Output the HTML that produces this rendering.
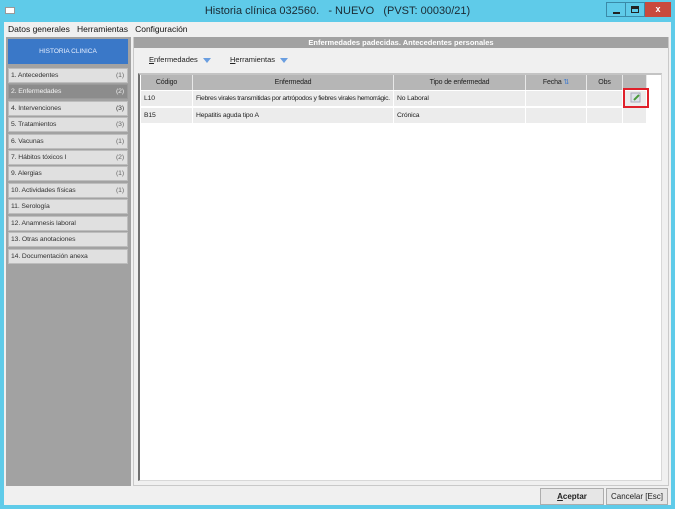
<!DOCTYPE html>
<html><head><meta charset="utf-8"><style>
*{margin:0;padding:0;box-sizing:border-box}
body{width:675px;height:509px;background:#5fcbe9;position:relative;overflow:hidden;font-family:"Liberation Sans",sans-serif;font-size:8px;color:#222}
.a{position:absolute}
.title{left:0;top:0;width:675px;height:22px;background:#5fcbe9;text-align:center;font-size:11px;line-height:23px;color:#1a2a33}
.win{left:4px;top:22px;width:667px;height:483px;background:#f0f0f0}
.menu{left:8px;top:24px;font-size:8.5px;color:#111}
.left{left:6px;top:37px;width:125px;height:449px;background:#a2a2a2}
.hdr{left:8px;top:39px;width:120px;height:25px;background:#3a78c8;color:#e8f0ff;font-size:6.5px;text-align:center;line-height:25px}
.it{left:8px;width:120px;height:15px;background:#e0e0e0;border:1px solid #bdbdbd;font-size:6.8px;line-height:14px;padding-left:2px;color:#333;letter-spacing:-0.1px}
.it span{position:absolute;right:3px;color:#666}
.it.sel{background:#8c8c8c;color:#f4f4f4;border-color:#999}
.it.sel span{color:#f0f0f0}
.rp{left:133px;top:37px;width:536px;height:449px;background:#f0f0f0;border:1px solid #c9c9c9}
.rh{left:134px;top:37px;width:534px;height:11px;background:#a2a2a2;color:#fff;font-weight:bold;font-size:7.5px;text-align:center;line-height:11px}
.tb{top:55px;font-size:7.5px;color:#222}
.tri{display:inline-block;width:0;height:0;border-left:4px solid transparent;border-right:4px solid transparent;border-top:5px solid #6a9ee0;margin-left:5px;vertical-align:middle}
.tbl{left:138px;top:73px;width:524px;height:408px;background:#fff;border-top:2px solid #c4c4c4;border-left:2px solid #707070;border-right:1px solid #d8d8d8;border-bottom:1px solid #d8d8d8}
.c{position:absolute;height:15px;line-height:15px;font-size:6.8px;overflow:hidden;white-space:nowrap;letter-spacing:-0.15px}
.h{background:#b6b6b6;text-align:center;border-right:1px solid #e8e8e8;top:75px;font-size:7px}
.r{background:#ececec;border-right:1px solid #fff;padding-left:3px}
.btn{top:488px;height:17px;background:#e6e6e6;border:1px solid #adadad;font-size:8px;text-align:center;line-height:15px}
</style></head><body>
<div class="a title">Historia clínica 032560.&nbsp;&nbsp; - NUEVO&nbsp;&nbsp; (PVST: 00030/21)</div>
<div class="a" style="left:5px;top:7px;width:10px;height:7px;background:#fff;border:1px solid #999"></div>
<div class="a" style="left:606px;top:2px;width:20px;height:15px;background:#5fcbe9;border:1px solid #3a8aa8"><div class="a" style="left:6px;top:9px;width:7px;height:2px;background:#222"></div></div>
<div class="a" style="left:625px;top:2px;width:20px;height:15px;background:#5fcbe9;border:1px solid #3a8aa8"><div class="a" style="left:5px;top:3px;width:8px;height:7px;border:1px solid #222;border-top-width:3px"></div></div>
<div class="a" style="left:645px;top:2px;width:26px;height:15px;background:#c94a3d;color:#fff;font-weight:bold;font-size:9px;text-align:center;line-height:14px">x</div>
<div class="a win"></div>
<div class="a menu">Datos generales&nbsp;&nbsp; Herramientas&nbsp;&nbsp; Configuración</div>
<div class="a left"></div>
<div class="a hdr">HISTORIA CLINICA</div>
<div class="a it" style="top:68px">1. Antecedentes<span>(1)</span></div>
<div class="a it sel" style="top:84px">2. Enfermedades<span>(2)</span></div>
<div class="a it" style="top:101px">4. Intervenciones<span style="color:#333">(3)</span></div>
<div class="a it" style="top:117px">5. Tratamientos<span>(3)</span></div>
<div class="a it" style="top:134px">6. Vacunas<span>(1)</span></div>
<div class="a it" style="top:150px">7. Hábitos tóxicos I<span>(2)</span></div>
<div class="a it" style="top:166px">9. Alergias<span>(1)</span></div>
<div class="a it" style="top:183px">10. Actividades físicas<span>(1)</span></div>
<div class="a it" style="top:199px">11. Serología</div>
<div class="a it" style="top:216px">12. Anamnesis laboral</div>
<div class="a it" style="top:232px">13. Otras anotaciones</div>
<div class="a it" style="top:249px">14. Documentación anexa</div>
<div class="a rp"></div>
<div class="a rh">Enfermedades padecidas. Antecedentes personales</div>
<div class="a tb" style="left:149px"><u>E</u>nfermedades<span class="tri"></span></div>
<div class="a tb" style="left:230px"><u>H</u>erramientas<span class="tri"></span></div>
<div class="a tbl"></div>
<div class="c h" style="left:141px;width:52px">Código</div>
<div class="c h" style="left:193px;width:201px">Enfermedad</div>
<div class="c h" style="left:394px;width:132px">Tipo de enfermedad</div>
<div class="c h" style="left:526px;width:61px">Fecha <span style="color:#3a78d0">⇅</span></div>
<div class="c h" style="left:587px;width:36px">Obs</div>
<div class="c h" style="left:623px;width:24px"></div>
<div class="c r" style="top:91px;left:141px;width:52px">L10</div>
<div class="c r" style="top:91px;left:193px;width:201px;letter-spacing:-0.3px">Fiebres virales transmitidas por artrópodos y fiebres virales hemorrágic.</div>
<div class="c r" style="top:91px;left:394px;width:132px">No Laboral</div>
<div class="c r" style="top:91px;left:526px;width:61px"></div>
<div class="c r" style="top:91px;left:587px;width:36px"></div>
<div class="c r" style="top:91px;left:623px;width:24px"></div>
<div class="c r" style="top:108px;left:141px;width:52px">B15</div>
<div class="c r" style="top:108px;left:193px;width:201px">Hepatitis aguda tipo A</div>
<div class="c r" style="top:108px;left:394px;width:132px">Crónica</div>
<div class="c r" style="top:108px;left:526px;width:61px"></div>
<div class="c r" style="top:108px;left:587px;width:36px"></div>
<div class="c r" style="top:108px;left:623px;width:24px"></div>
<div class="a" style="left:623px;top:88px;width:26px;height:20px;border:2px solid #e0202a"></div>
<svg class="a" style="left:630px;top:92px" width="12" height="11"><rect x="1" y="1" width="9" height="9" fill="#dde2ea" stroke="#aab"/><path d="M4 8 L9 3" stroke="#4a9a3a" stroke-width="2"/></svg>
<div class="a btn" style="left:540px;width:64px;font-weight:bold"><u>A</u>ceptar</div>
<div class="a btn" style="left:606px;width:62px">Cancelar [Esc]</div>
</body></html>
